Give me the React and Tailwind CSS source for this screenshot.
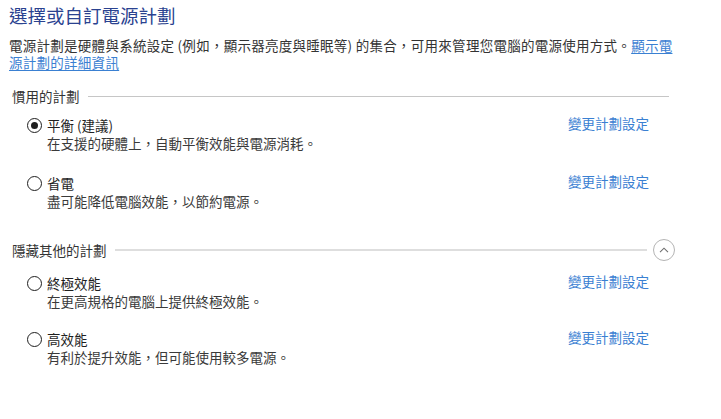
const FONT = { fontFamily: '"Noto Sans CJK TC", "Noto Sans", sans-serif' };

const plans = {
  preferred: [
    { name: "平衡 (建議)", desc: "在支援的硬體上，自動平衡效能與電源消耗。", checked: true },
    { name: "省電", desc: "盡可能降低電腦效能，以節約電源。" },
  ],
  hidden: [
    { name: "終極效能", desc: "在更高規格的電腦上提供終極效能。" },
    { name: "高效能", desc: "有利於提升效能，但可能使用較多電源。" },
  ],
};

const Radio = ({ checked }) => (
  <span className="w-[15px] h-[15px] rounded-full border-[1.5px] border-[#1f1f1f] flex items-center justify-center shrink-0">
    {checked && <span className="w-[7px] h-[7px] rounded-full bg-[#1f1f1f]" />}
  </span>
);

const PlanRow = ({ plan, className }) => (
  <div className={`w-[640px] pl-[18px] flex items-start ${className}`}>
    <div className="flex-1">
      <div className="flex items-center gap-[5px] h-[18px]">
        <Radio checked={plan.checked} />
        <span className="text-[#1f1f1f] leading-[18px]">{plan.name}</span>
      </div>
      <div className="pl-[20px] leading-[18px] text-[#3a3a3a]">{plan.desc}</div>
    </div>
    <a className="text-[#3a80d2] leading-[16px] -mt-[1px] cursor-pointer">變更計劃設定</a>
  </div>
);

export default function App() {
  return (
    <div lang="zh-Hant-TW" className="bg-white min-h-[419px] pl-[9px] pt-[3px] text-[13.5px]" style={FONT}>
      <h1 className="text-[18.5px] leading-[24px] text-[#2a4290]">選擇或自訂電源計劃</h1>

      <p className="mt-[10px] w-[676px] leading-[17px] tracking-[0.27px] text-[#333]">
        電源計劃是硬體與系統設定 (例如，顯示器亮度與睡眠等) 的集合，可用來管理您電腦的電源使用方式。
        <a className="text-[#3a80d2] underline underline-offset-2 cursor-pointer">顯示電源計劃的詳細資訊</a>
      </p>

      {/* 慣用的計劃 */}
      <div className="mt-[15px] w-[660px] h-[20px] pl-[3px] flex items-center gap-[8px]">
        <span className="text-[#333] leading-[20px]">慣用的計劃</span>
        <div className="flex-1 h-px bg-[#c6c6c6]" />
      </div>
      <PlanRow plan={plans.preferred[0]} className="mt-[10px]" />
      <PlanRow plan={plans.preferred[1]} className="mt-[22px]" />

      {/* 隱藏其他的計劃 */}
      <div className="mt-[29px] w-[666px] h-[22px] pl-[3px] flex items-center gap-[8px]">
        <span className="text-[#333] leading-[20px]">隱藏其他的計劃</span>
        <div className="flex-1 h-[2px] bg-[#dedede]" />
        <button className="w-[22px] h-[22px] rounded-full border border-[#b4b4b4] flex items-center justify-center -ml-[2px]">
          <svg width="10" height="6" viewBox="0 0 10 6" fill="none">
            <path d="M1 5.2 L5 1.2 L9 5.2" stroke="#6e6e6e" strokeWidth="1.1" />
          </svg>
        </button>
      </div>
      <PlanRow plan={plans.hidden[0]} className="mt-[13px]" />
      <PlanRow plan={plans.hidden[1]} className="mt-[20px]" />
    </div>
  );
}
